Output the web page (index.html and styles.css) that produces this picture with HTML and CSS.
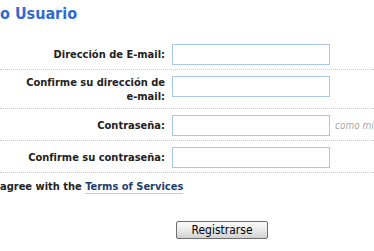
FILE: index.html
```html
<!DOCTYPE html>
<html lang="es">
<head>
    <meta charset="UTF-8">
    <title>Registro de Usuario</title>
    <link rel="stylesheet" href="styles.css">
</head>
<body>
    <h1 class="title">o Usuario</h1>

    <form class="signup">
        <div class="row">
            <label class="label" for="email">Dirección de E-mail:</label>
            <input class="field" type="text" id="email">
        </div>
        <div class="row">
            <label class="label" for="email2">Confirme su dirección de e-mail:</label>
            <input class="field" type="text" id="email2">
        </div>
        <div class="row">
            <label class="label" for="pass">Contraseña:</label>
            <input class="field" type="password" id="pass">
            <span class="hint">como mínimo 6 caracteres</span>
        </div>
        <div class="row">
            <label class="label" for="pass2">Confirme su contraseña:</label>
            <input class="field" type="password" id="pass2">
        </div>

        <p class="agree">agree with the <a href="#">Terms of Services</a></p>

        <div class="actions">
            <button type="submit" class="submit">Registrarse</button>
        </div>
    </form>
</body>
</html>
```

FILE: styles.css
```css
body {
    font-family: "DejaVu Sans Condensed", "Liberation Sans", sans-serif;
    font-size: 11px;
    color: #222;
    background-color: #fff;
    margin: 0;
    overflow: hidden;
}
.title {
    margin: 0 0 14px;
    padding-top: 4px;
    font-size: 16px;
    line-height: 20px;
    color: #3169d4;
}
.signup {
    margin: 0;
}
.row {
    display: flex;
    align-items: flex-start;
    padding: 6px 0 4px;
    border-bottom: 1px dotted #c8c8c8;
    white-space: nowrap;
    overflow: hidden;
}
.label {
    flex: none;
    width: 150px;
    margin-left: 15px;
    align-self: center;
    text-align: right;
    font-weight: bold;
    line-height: 14px;
    white-space: normal;
}
.field {
    flex: none;
    width: 158px;
    height: 21px;
    margin: 0 0 0 7px;
    padding: 0 3px;
    box-sizing: border-box;
    border: 1px solid #a9c6ee;
}
.hint {
    flex: none;
    margin-left: 5px;
    align-self: center;
    font-size: 10px;
    font-style: italic;
    color: #aaa;
}
.agree {
    margin: 6px 0 0;
    line-height: 16px;
    font-weight: bold;
}
.agree a {
    color: #1d3f6e;
    text-decoration: none;
    border-bottom: 1px solid #ccc;
}
.actions {
    padding: 26px 0 0 176px;
}
.submit {
    width: 92px;
    height: 18px;
    padding: 0;
    font-family: "DejaVu Sans Condensed", "Liberation Sans", sans-serif;
    font-size: 12px;
    color: #000;
    border: 1px solid #707070;
    border-radius: 2px;
    background: linear-gradient(#fafafa, #e6e6e6 60%, #d0d0d0);
}
```
